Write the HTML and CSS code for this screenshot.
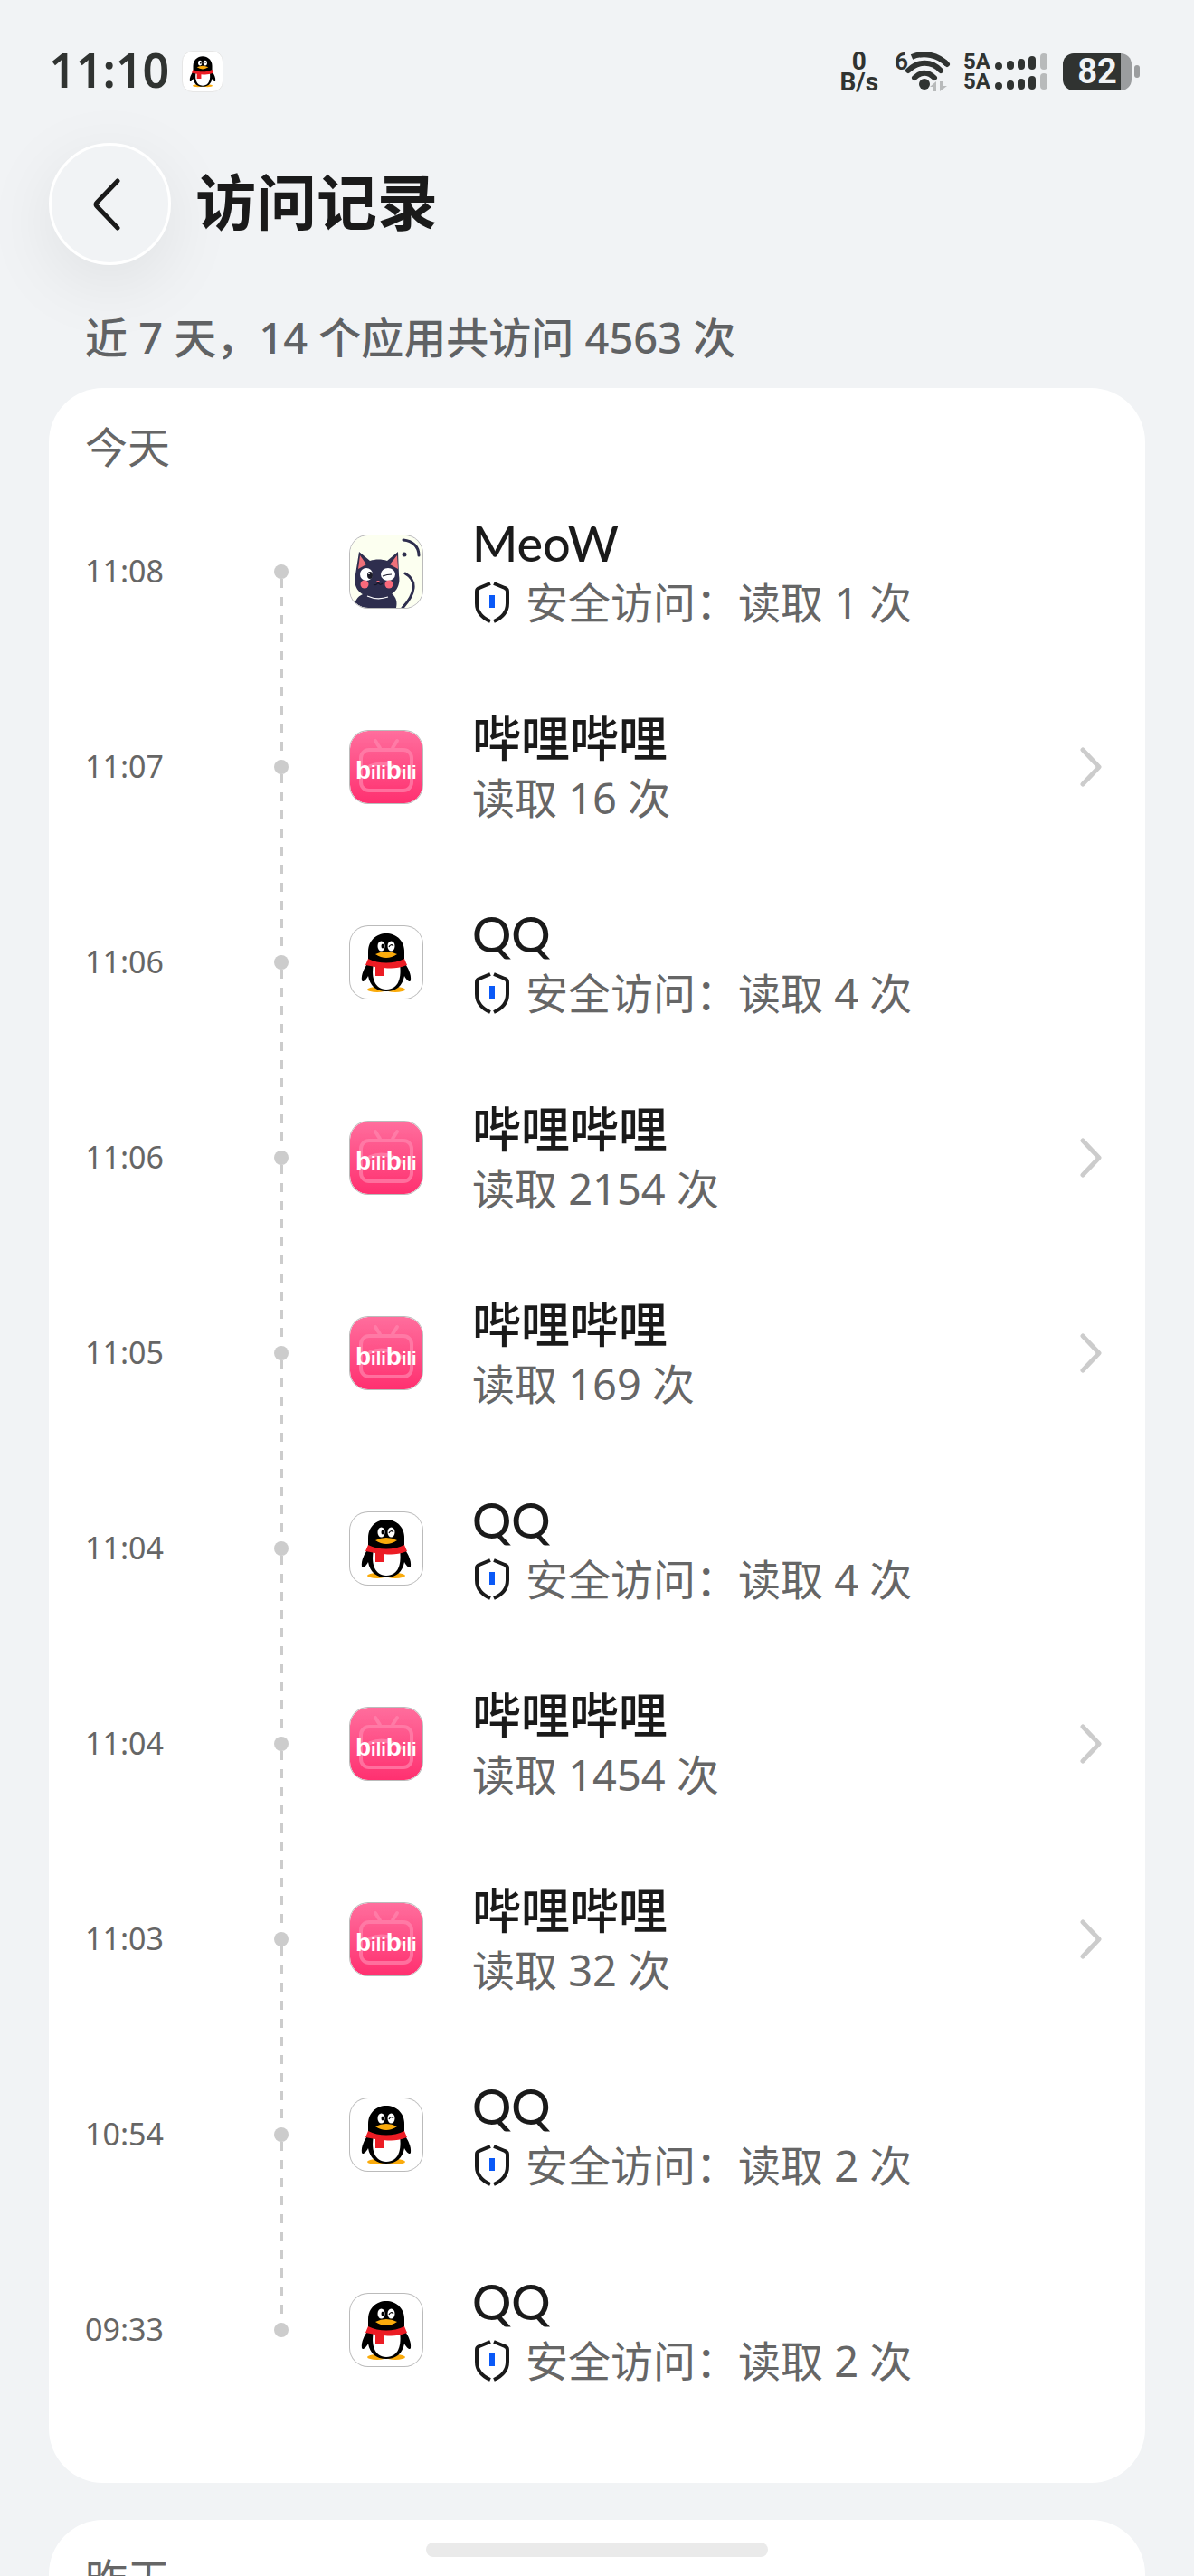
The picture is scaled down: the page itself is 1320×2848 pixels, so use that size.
FILE: index.html
```html
<!DOCTYPE html>
<html lang="zh-CN">
<head>
  <meta charset="UTF-8" />
  <meta name="viewport" content="width=device-width, initial-scale=1" />
  <title>访问记录</title>
  <link rel="stylesheet" href="styles.css">
</head>
<body>

<!-- Shared icons -->
<svg class="sprite" aria-hidden="true">
  <defs>
    <linearGradient id="pink" x1="0" y1="0" x2="0" y2="1">
      <stop offset="0" stop-color="#ff6e9d" />
      <stop offset="1" stop-color="#ff3070" />
    </linearGradient>
    <clipPath id="tile"><rect width="80" height="80" rx="20" /></clipPath>
  </defs>

  <symbol id="penguin" viewBox="0 0 80 80">
    <ellipse cx="30" cy="70" rx="11" ry="3" fill="#faab0c" />
    <ellipse cx="50" cy="70" rx="11" ry="3" fill="#faab0c" />
    <path d="M20 40C16 46 12 53 13 60C14 63 18 59 20 55C22 66 29 72 40 72S58 66 60 55C62 59 66 63 67 60C68 53 64 46 60 40Z" fill="#000" />
    <path d="M20 41V28C20 16 29 8 40 8S60 16 60 28V41Z" fill="#000" />
    <path d="M26 42H55C57 56 54 70 40 70C27 70 23 56 26 42Z" fill="#fff" />
    <path d="M20 36C32 42 48 42 60 36L63 43C52 47 46 47 37 46V55H28V45L17 43Z" fill="#ec1c24" />
    <ellipse cx="34.500" cy="22" rx="4" ry="5.500" fill="#fff" />
    <ellipse cx="45.500" cy="22" rx="4" ry="5.500" fill="#fff" />
    <ellipse cx="36" cy="22" rx="1.500" ry="2.500" fill="#000" />
    <path d="M43 23Q45 19 48 22" fill="none" stroke="#000" stroke-width="1.200" />
    <path d="M28 31Q40 25 52 31Q40 39 28 31Z" fill="#faab0c" />
  </symbol>

  <symbol id="cat" viewBox="0 0 80 80">
    <g clip-path="url(#tile)">
      <rect width="80" height="80" fill="#fcfff0" />
      <g fill="none" stroke="#2e2e4e" stroke-width="3" stroke-linecap="round">
        <path d="M59 5C69 6 76 12 76 22" />
        <path d="M61 42C75 50 72 65 58 80" />
      </g>
      <circle cx="60" cy="21" r="2.500" fill="#2e2e4e" />
      <path d="M5 80C5 70 10 66 17 64H46C52 69 52 75 51 80Z" fill="#2e2e4e" />
      <path d="M10 18L22 28C28 26 35 26 41 28L53 18L54 44C57 61 44 69 30 69C15 69 2 61 6 43Z" fill="#2e2e4e" />
      <path d="M11 22L18 32L9 37Z" fill="#ef717a" />
      <path d="M52 22L44 32L53 37Z" fill="#ef717a" />
      <circle cx="18" cy="43" r="7" fill="#fff" />
      <ellipse cx="42" cy="43" rx="8" ry="7" fill="#fff" />
      <ellipse cx="22" cy="44" rx="3" ry="4" fill="#1c1c28" />
      <circle cx="21" cy="42" r="1" fill="#fff" />
      <path d="M36 45Q41 43 46 43M26 54Q29 56 31 52Q33 56 36 53" fill="none" stroke="#17172a" stroke-width="1.200" />
      <circle cx="16" cy="54" r="4.500" fill="#f9697b" />
      <circle cx="43" cy="54" r="4.500" fill="#f9697b" />
      <path d="M29 50H33L31 52Z" fill="#f9697b" />
      <path d="M19 67Q30 72 42 68" fill="none" stroke="#fff" stroke-width="1.200" />
    </g>
  </symbol>

  <symbol id="bili" viewBox="0 0 80 80">
    <rect width="80" height="80" rx="20" fill="url(#pink)" />
    <g fill="none" stroke="#ff86ae" stroke-width="4" stroke-linecap="round" opacity="0.700">
      <rect x="12" y="21" width="56" height="45" rx="9" />
      <path d="M28 11L33 19M52 11L47 19" />
      <path d="M22 39Q40 32 58 45" />
    </g>
    <text class="bili-text" x="6" y="53"><tspan class="bili-big">b</tspan>ili<tspan class="bili-big">b</tspan>ili</text>
  </symbol>

  <symbol id="shield" viewBox="0 0 38 46">
    <path d="M17 2L5 7Q2 8 2 11V24C2 34 8 40 17 44M21 2L33 7Q36 8 36 11V24C36 34 30 40 21 44" fill="none" stroke="#1a1a1a" stroke-width="4" />
    <rect x="16" y="15" width="6" height="14" fill="#0a59f7" />
  </symbol>

  <symbol id="next" viewBox="0 0 24 44">
    <path d="M3 3L21 22L3 41" fill="none" stroke="#ccc" stroke-width="5" stroke-linecap="round" stroke-linejoin="round" />
  </symbol>

  <symbol id="signal" viewBox="0 0 60 18">
    <g fill="#303331">
      <circle cx="5" cy="14" r="4" />
      <rect x="14" y="8" width="8" height="10" rx="4" />
      <rect x="26" y="6" width="8" height="12" rx="4" />
      <rect x="38" y="3" width="8" height="15" rx="4" />
    </g>
    <rect x="51" y="0" width="8" height="18" rx="4" fill="#b8babb" />
  </symbol>
</svg>

<div class="screen">
  <div class="status-bar">
    <span class="clock">11:10</span>
    <span class="notice"><svg viewBox="0 0 80 80"><use href="#penguin" /></svg></span>

    <div class="net-speed"><span>0</span><span>B/s</span></div>
    <svg class="wifi" viewBox="0 0 62 46">
      <text class="wifi-num" x="0" y="21">6</text>
      <g fill="none" stroke="#303331" stroke-width="6" stroke-linecap="round">
        <path d="M19 7C33 1 48 5 58 15" stroke-linecap="butt" />
        <path d="M56 13L58 15" />
        <path d="M15 22C26 11 41 11 51 22" />
        <path d="M22 30C29 23 37 23 44 30" />
      </g>
      <circle cx="33" cy="37" r="6" fill="#303331" />
      <path d="M46 34V45H43V40H39Z M50 45V34H53V39H58Z" fill="#b8babb" />
    </svg>
    <div class="sims">
      <div class="sim"><span>5A</span><svg><use href="#signal" /></svg></div>
      <div class="sim"><span>5A</span><svg><use href="#signal" /></svg></div>
    </div>
    <div class="battery"><span class="battery-body">82</span><span class="battery-tip"></span></div>
  </div>

  <header class="header">
    <button class="back" type="button" aria-label="返回">
      <svg viewBox="0 0 32 58"><path d="M28 3L5 27Q3 29 5 31L28 55" fill="none" stroke="#1a1a1a" stroke-width="5" stroke-linecap="round" stroke-linejoin="round" /></svg>
    </button>
    <h1>访问记录</h1>
  </header>

  <p class="summary">近 7 天，14 个应用共访问 4563 次</p>

  <main class="cards">
    <section class="card">
      <h2>今天</h2>
      <ul class="timeline">
        <li class="record">
          <time>11:08</time>
          <span class="dot"></span>
          <svg class="app-icon"><use href="#cat" /></svg>
          <div class="info">
            <h3>MeoW</h3>
            <p><svg class="shield"><use href="#shield" /></svg>安全访问：读取 1 次</p>
          </div>
        </li>
        <li>
          <a class="record" href="#">
            <time>11:07</time>
            <span class="dot"></span>
            <svg class="app-icon"><use href="#bili" /></svg>
            <div class="info">
              <h3>哔哩哔哩</h3>
              <p>读取 16 次</p>
            </div>
            <svg class="next"><use href="#next" /></svg>
          </a>
        </li>
        <li class="record">
          <time>11:06</time>
          <span class="dot"></span>
          <svg class="app-icon"><use href="#penguin" /></svg>
          <div class="info">
            <h3>QQ</h3>
            <p><svg class="shield"><use href="#shield" /></svg>安全访问：读取 4 次</p>
          </div>
        </li>
        <li>
          <a class="record" href="#">
            <time>11:06</time>
            <span class="dot"></span>
            <svg class="app-icon"><use href="#bili" /></svg>
            <div class="info">
              <h3>哔哩哔哩</h3>
              <p>读取 2154 次</p>
            </div>
            <svg class="next"><use href="#next" /></svg>
          </a>
        </li>
        <li>
          <a class="record" href="#">
            <time>11:05</time>
            <span class="dot"></span>
            <svg class="app-icon"><use href="#bili" /></svg>
            <div class="info">
              <h3>哔哩哔哩</h3>
              <p>读取 169 次</p>
            </div>
            <svg class="next"><use href="#next" /></svg>
          </a>
        </li>
        <li class="record">
          <time>11:04</time>
          <span class="dot"></span>
          <svg class="app-icon"><use href="#penguin" /></svg>
          <div class="info">
            <h3>QQ</h3>
            <p><svg class="shield"><use href="#shield" /></svg>安全访问：读取 4 次</p>
          </div>
        </li>
        <li>
          <a class="record" href="#">
            <time>11:04</time>
            <span class="dot"></span>
            <svg class="app-icon"><use href="#bili" /></svg>
            <div class="info">
              <h3>哔哩哔哩</h3>
              <p>读取 1454 次</p>
            </div>
            <svg class="next"><use href="#next" /></svg>
          </a>
        </li>
        <li>
          <a class="record" href="#">
            <time>11:03</time>
            <span class="dot"></span>
            <svg class="app-icon"><use href="#bili" /></svg>
            <div class="info">
              <h3>哔哩哔哩</h3>
              <p>读取 32 次</p>
            </div>
            <svg class="next"><use href="#next" /></svg>
          </a>
        </li>
        <li class="record">
          <time>10:54</time>
          <span class="dot"></span>
          <svg class="app-icon"><use href="#penguin" /></svg>
          <div class="info">
            <h3>QQ</h3>
            <p><svg class="shield"><use href="#shield" /></svg>安全访问：读取 2 次</p>
          </div>
        </li>
        <li class="record">
          <time>09:33</time>
          <span class="dot"></span>
          <svg class="app-icon"><use href="#penguin" /></svg>
          <div class="info">
            <h3>QQ</h3>
            <p><svg class="shield"><use href="#shield" /></svg>安全访问：读取 2 次</p>
          </div>
        </li>
      </ul>
    </section>

    <section class="card">
      <h2>昨天</h2>
    </section>
  </main>

  <div class="home-bar"></div>
</div>

</body>
</html>
```
FILE: styles.css
```css
* {
  box-sizing: border-box;
}
body {
  margin: 0;
  font-family: "Noto Sans", "Noto Sans CJK SC", sans-serif;
  background: #f1f3f5;
  color: #1a1a1a;
}
h1, h2, h3, p, ul {
  margin: 0;
  padding: 0;
}
ul {
  list-style: none;
}
svg {
  display: block;
  flex: none;
}
.sprite {
  position: absolute;
  width: 0;
  height: 0;
}
.screen {
  position: relative;
  height: 100vh;
  overflow: hidden;
}

/* Status bar */
.status-bar {
  display: flex;
  align-items: center;
  height: 158px;
  padding: 0 60px 0 54px;
  color: #303331;
  font-family: Roboto, "Noto Sans", sans-serif;
  font-weight: 700;
}
.clock {
  padding-bottom: 4px;
  font-family: "Noto Sans", sans-serif;
  font-size: 52px;
  line-height: 60px;
  font-weight: 600;
}
.notice {
  margin-left: 14px;
  padding: 1px;
  background: #fff;
  border: 1px solid #e6e6e6;
  border-radius: 12px;
}
.notice svg {
  width: 42px;
  height: 42px;
}
.net-speed {
  display: flex;
  flex-direction: column;
  align-items: center;
  margin-left: auto;
  font-size: 28px;
  line-height: 23px;
}
.wifi {
  width: 62px;
  height: 46px;
  margin-left: 18px;
}
.wifi-num {
  font-size: 26px;
  fill: #303331;
}
.sims {
  margin-left: 14px;
  font-size: 24px;
  line-height: 22px;
}
.sim {
  display: flex;
  align-items: center;
  gap: 4px;
}
.sim svg {
  width: 60px;
  height: 18px;
}
.battery {
  display: flex;
  align-items: center;
  gap: 3px;
  margin-left: 16px;
}
.battery-body {
  width: 76px;
  border-radius: 12px;
  background: linear-gradient(to right, #303331 64px, #9b9d9f 64px);
  color: #f1f3f5;
  font-size: 38px;
  line-height: 41px;
  text-align: center;
}
.battery-tip {
  width: 6px;
  height: 14px;
  border-radius: 3px;
  background: #9b9d9f;
}

/* Page header */
.header {
  display: flex;
  align-items: center;
  gap: 27px;
  padding: 0 54px;
}
.back {
  display: flex;
  align-items: center;
  width: 135px;
  height: 135px;
  padding: 0 0 0 45px;
  border: 3px solid #fff;
  border-radius: 50%;
  background: #f1f3f5;
  box-shadow: 0 20px 80px rgba(0, 0, 0, 0.08);
}
.back svg {
  width: 32px;
  height: 58px;
}
h1 {
  padding-bottom: 6px;
  font-size: 67px;
  line-height: 80px;
  font-weight: 700;
}
.summary {
  padding: 48px 94px 24px;
  color: #606264;
  font-size: 47px;
  line-height: 64px;
  font-weight: 500;
}

/* Cards */
.cards {
  display: flex;
  flex-direction: column;
  gap: 41px;
  padding: 0 54px;
}
.card {
  padding: 38px 48px 61px 40px;
  border-radius: 60px;
  background: #fff;
}
h2 {
  padding-bottom: 2px;
  color: #666;
  font-size: 47px;
  line-height: 55px;
  font-weight: 400;
}
.record {
  display: grid;
  grid-template-columns: 209px 16px 80px 1fr 24px;
  align-items: center;
  height: 216px;
  color: inherit;
  text-decoration: none;
}
.record time {
  padding-bottom: 2px;
  color: #666;
  font-size: 34px;
  line-height: 40px;
}
.dot {
  position: relative;
  width: 16px;
  height: 16px;
  border-radius: 50%;
  background: #ccc;
}
/* Dashed connector down to the next dot */
.timeline li:not(:last-child) .dot::after {
  content: "";
  position: absolute;
  top: 16px;
  left: 7px;
  width: 3px;
  height: 200px;
  background: repeating-linear-gradient(#ccc 0 10px, transparent 10px 20px);
}
.app-icon {
  width: 80px;
  height: 80px;
  margin-left: 68px;
  border-radius: 20px;
  box-shadow: 0 0 0 1px #bbb;
}
.info {
  margin-left: 123px;
}
h3 {
  font-family: Lato, "Noto Sans CJK SC", sans-serif;
  font-size: 54px;
  line-height: 68px;
  font-weight: 500;
}
.info p {
  display: flex;
  align-items: center;
  color: #666;
  font-size: 47px;
  line-height: 62px;
}
.shield {
  width: 38px;
  height: 46px;
  margin: 0 18px 0 3px;
}
.next {
  width: 24px;
  height: 44px;
}
.bili-text {
  font-family: "Liberation Sans", sans-serif;
  font-size: 20px;
  font-weight: 700;
  fill: #fff;
}
.bili-big {
  font-size: 28px;
}

.home-bar {
  position: absolute;
  bottom: 21px;
  left: 50%;
  width: 378px;
  height: 16px;
  border-radius: 8px;
  background: #eaeaea;
  transform: translateX(-50%);
}
```
